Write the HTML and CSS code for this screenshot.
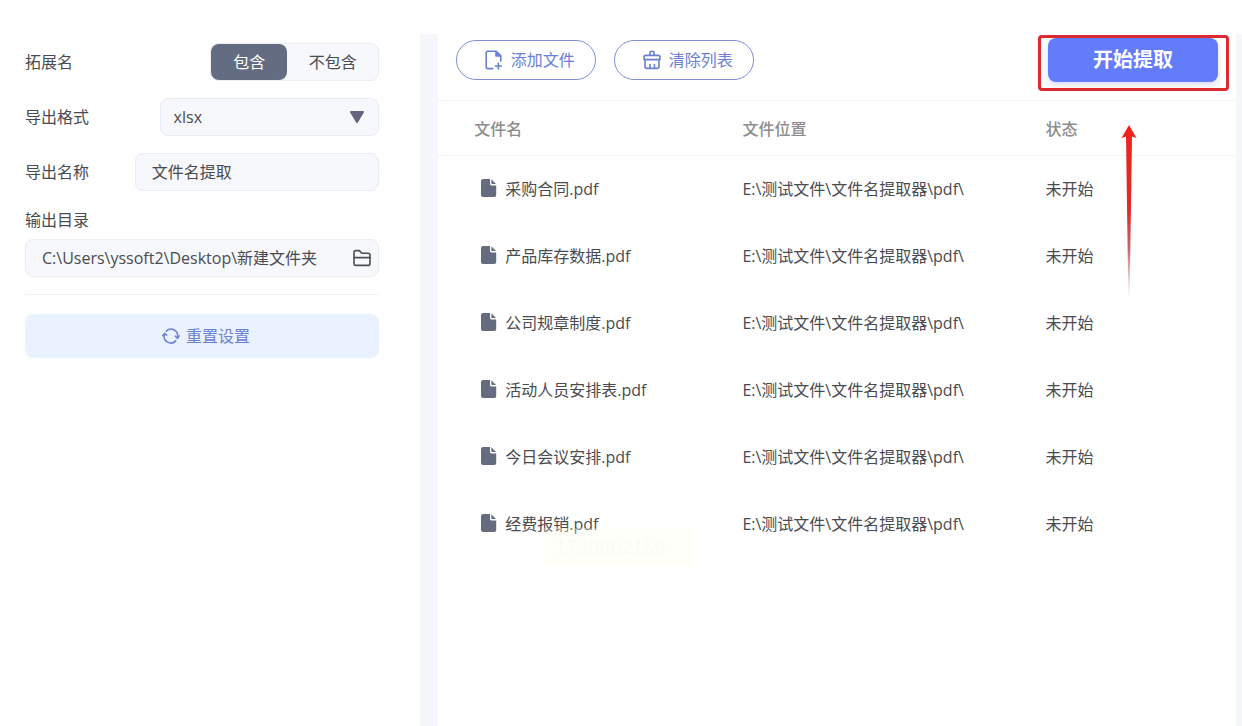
FILE: index.html
```html
<!DOCTYPE html>
<html lang="zh-CN">
<head>
  <meta charset="UTF-8" />
  <meta name="viewport" content="width=device-width, initial-scale=1.0"/>
  <title>文件名提取</title>
  <link rel="stylesheet" href="styles.css">
</head>
<body>
  <div class="app">
    <form class="sidebar">
      <div class="field">
        <span class="label">拓展名</span>
        <div class="toggle">
          <button type="button" class="toggle-item active">包含</button>
          <button type="button" class="toggle-item">不包含</button>
        </div>
      </div>
      <div class="field">
        <label class="label" for="format">导出格式</label>
        <div class="control select-box">
          <select id="format">
            <option>xlsx</option>
          </select>
          <svg class="caret" width="16" height="12" viewBox="0 0 16 12"><path d="M2 1h12L8 11z" fill="#646380" stroke="#646380" stroke-width="2" stroke-linejoin="round"/></svg>
        </div>
      </div>
      <div class="field">
        <label class="label" for="name">导出名称</label>
        <div class="control name-box">
          <input id="name" type="text" value="文件名提取">
        </div>
      </div>
      <label class="label" for="path">输出目录</label>
      <div class="control path-box">
        <input id="path" type="text" value="C:\Users\yssoft2\Desktop\新建文件夹">
        <button type="button" class="browse" aria-label="浏览">
          <svg width="20" height="18" viewBox="0 0 20 18" fill="none" stroke="#4b4d54" stroke-width="1.6" stroke-linejoin="round" stroke-linecap="round"><path d="M2 15V3.2Q2 1.6 3.6 1.6H7.4L9.8 4.2H16Q18 4.2 18 6V14.4Q18 16.4 15.8 16.4H3.8Q2 16.4 2 15Z"/><path d="M2 8.6H18"/></svg>
        </button>
      </div>
      <hr>
      <button type="reset" class="reset">
        <svg width="18" height="18" viewBox="0 0 20 20" fill="none" stroke="#6a80d2" stroke-width="1.7" stroke-linecap="round" stroke-linejoin="round"><path d="M4.8 4.6A7.4 7.4 0 0 1 17.4 10.4"/><path d="M15.2 15.4A7.4 7.4 0 0 1 2.6 8.6"/><path d="M14.8 10.2L17.3 12.6L19.2 9.8"/><path d="M0.9 9.6L2.7 7.2L5.2 9"/></svg>
        <span>重置设置</span>
      </button>
    </form>

    <div class="splitter"></div>

    <main class="panel">
      <div class="toolbar">
        <button type="button" class="pill">
          <svg width="20" height="20" viewBox="0 0 20 20" fill="none" stroke="#6a80d2" stroke-width="1.6" stroke-linecap="round" stroke-linejoin="round"><path d="M8.6 18.6H4Q2.2 18.6 2.2 16.8V3Q2.2 1.2 4 1.2H12L16.8 6V11"/><path d="M12 1.2V6H16.8Z" fill="#6a80d2"/><path d="M14.4 13V19M11.4 16H17.4"/></svg>
          <span>添加文件</span>
        </button>
        <button type="button" class="pill">
          <svg width="20" height="20" viewBox="0 0 20 20" fill="none" stroke="#6a80d2" stroke-width="1.6" stroke-linecap="round" stroke-linejoin="round"><path d="M8 5.4V2.8Q8 1.2 10 1.2Q12 1.2 12 2.8V5.4"/><path d="M3.6 5.4H16.4Q18 5.4 18 7.2V9.6H2V7.2Q2 5.4 3.6 5.4Z"/><path d="M3 9.6V16.6Q3 18.4 4.8 18.4H15.2Q17 18.4 17 16.6V9.6"/><path d="M8 18V14.6M12.4 18V14.6"/></svg>
          <span>清除列表</span>
        </button>
        <div class="start-wrap">
          <button type="button" class="start">开始提取</button>
          <div class="mark"></div>
          <svg class="arrow" width="16" height="178" viewBox="0 0 16 178">
            <defs>
              <linearGradient id="fade" x1="0" y1="0" x2="0" y2="1">
                <stop offset="0" stop-color="#f0221a"/>
                <stop offset="0.5" stop-color="#e02a28"/>
                <stop offset="0.72" stop-color="#b5525c" stop-opacity="0.85"/>
                <stop offset="1" stop-color="#e8a0a0" stop-opacity="0"/>
              </linearGradient>
            </defs>
            <path d="M8 1L15.5 14L11 12.5L8.6 177H7.4L5 12.5L0.5 14Z" fill="url(#fade)"/>
          </svg>
        </div>
      </div>

      <table class="files">
        <thead>
          <tr><th class="col-name">文件名</th><th class="col-path">文件位置</th><th>状态</th></tr>
        </thead>
        <tbody>
          <tr>
            <td><svg class="doc" width="16" height="18" viewBox="0 0 16 18"><path d="M2 0H9V5Q9 6.4 10.4 6.4H15.2V16Q15.2 18 13.2 18H2Q0 18 0 16V2Q0 0 2 0Z"/><path d="M10.4 0.2L15 5H10.4Z"/></svg>采购合同.pdf</td>
            <td>E:\测试文件\文件名提取器\pdf\</td>
            <td>未开始</td>
          </tr>
          <tr>
            <td><svg class="doc" width="16" height="18" viewBox="0 0 16 18"><path d="M2 0H9V5Q9 6.4 10.4 6.4H15.2V16Q15.2 18 13.2 18H2Q0 18 0 16V2Q0 0 2 0Z"/><path d="M10.4 0.2L15 5H10.4Z"/></svg>产品库存数据.pdf</td>
            <td>E:\测试文件\文件名提取器\pdf\</td>
            <td>未开始</td>
          </tr>
          <tr>
            <td><svg class="doc" width="16" height="18" viewBox="0 0 16 18"><path d="M2 0H9V5Q9 6.4 10.4 6.4H15.2V16Q15.2 18 13.2 18H2Q0 18 0 16V2Q0 0 2 0Z"/><path d="M10.4 0.2L15 5H10.4Z"/></svg>公司规章制度.pdf</td>
            <td>E:\测试文件\文件名提取器\pdf\</td>
            <td>未开始</td>
          </tr>
          <tr>
            <td><svg class="doc" width="16" height="18" viewBox="0 0 16 18"><path d="M2 0H9V5Q9 6.4 10.4 6.4H15.2V16Q15.2 18 13.2 18H2Q0 18 0 16V2Q0 0 2 0Z"/><path d="M10.4 0.2L15 5H10.4Z"/></svg>活动人员安排表.pdf</td>
            <td>E:\测试文件\文件名提取器\pdf\</td>
            <td>未开始</td>
          </tr>
          <tr>
            <td><svg class="doc" width="16" height="18" viewBox="0 0 16 18"><path d="M2 0H9V5Q9 6.4 10.4 6.4H15.2V16Q15.2 18 13.2 18H2Q0 18 0 16V2Q0 0 2 0Z"/><path d="M10.4 0.2L15 5H10.4Z"/></svg>今日会议安排.pdf</td>
            <td>E:\测试文件\文件名提取器\pdf\</td>
            <td>未开始</td>
          </tr>
          <tr>
            <td><svg class="doc" width="16" height="18" viewBox="0 0 16 18"><path d="M2 0H9V5Q9 6.4 10.4 6.4H15.2V16Q15.2 18 13.2 18H2Q0 18 0 16V2Q0 0 2 0Z"/><path d="M10.4 0.2L15 5H10.4Z"/></svg>经费报销.pdf</td>
            <td>E:\测试文件\文件名提取器\pdf\</td>
            <td>未开始</td>
          </tr>
        </tbody>
      </table>
      <div class="watermark">1730862156</div>
    </main>
  </div>
</body>
</html>
```
FILE: styles.css
```css
* {
  box-sizing: border-box;
}
body {
  margin: 0;
  background: #fff;
  color: #4a4b50;
  font-family: "Open Sans", "Noto Sans CJK SC", sans-serif;
  font-size: 16px;
  line-height: 24px;
}
button, input, select {
  margin: 0;
  padding: 0;
  border: none;
  background: none;
  color: inherit;
  font: inherit;
}
.app {
  display: flex;
  min-height: 100vh;
  padding: 34px 6px 0 0;
  background: linear-gradient(#fff 34px, #f6f7fb 34px);
}

/* left settings */
.sidebar {
  flex: 0 0 34%;
  padding: 9px 41px 0 25px;
  background: #fff;
}
.field {
  display: flex;
  align-items: center;
  justify-content: space-between;
  height: 38px;
  margin-bottom: 17px;
}
.label {
  display: block;
}
.toggle, .control {
  display: flex;
  align-items: center;
  height: 38px;
  border: 1px solid #ebedf3;
  border-radius: 8px;
  background: #f7f8fb;
}
.toggle-item {
  width: 91px;
  height: 36px;
  border-radius: 8px;
}
.toggle-item.active {
  width: 76px;
  background: #636c80;
  color: #fff;
}
.select-box {
  position: relative;
  width: 62%;
}
.select-box select {
  width: 100%;
  height: 100%;
  padding: 0 13px;
  appearance: none;
}
.caret {
  position: absolute;
  right: 13px;
  pointer-events: none;
}
.name-box {
  width: 69%;
}
.control input {
  flex: 1;
  min-width: 0;
  padding-left: 16px;
}
.path-box {
  margin-top: 7px;
}
.browse {
  display: flex;
  padding: 0 6px;
}
hr {
  height: 1px;
  margin: 17px 0 19px;
  border: none;
  background: #f0f1f4;
}
.reset {
  display: flex;
  align-items: center;
  justify-content: center;
  gap: 6px;
  width: 100%;
  height: 44px;
  padding-left: 8px;
  border-radius: 8px;
  background: #eaf2ff;
  color: #6a80d2;
}

.splitter {
  width: 18px;
}

/* file list */
.panel {
  position: relative;
  flex: 1;
  background: #fff;
}
.toolbar {
  display: flex;
  align-items: center;
  gap: 18px;
  padding: 4px 18px 18px;
  border-bottom: 1px solid #f3f4f6;
}
.pill {
  display: flex;
  align-items: center;
  justify-content: center;
  gap: 7px;
  width: 140px;
  height: 40px;
  padding-left: 6px;
  border: 1px solid #7f90d0;
  border-radius: 20px;
  color: #6a80d2;
}
.start-wrap {
  position: relative;
  margin-left: auto;
}
.start {
  display: block;
  width: 170px;
  height: 44px;
  border-radius: 8px;
  background: #637cfb;
  box-shadow: 0 3px 6px #dcd9fb;
  color: #fff;
  font-size: 20px;
  font-weight: bold;
}
/* red callout round the start button */
.mark {
  position: absolute;
  inset: -3px -11px -9px -10px;
  border: 3px solid #dc2a30;
  border-radius: 4px;
  pointer-events: none;
}
.arrow {
  position: absolute;
  top: 86px;
  left: 73px;
}
.files {
  width: 100%;
  table-layout: fixed;
  border-collapse: collapse;
}
.files th {
  height: 54px;
  padding: 2px 0 0 1px;
  border-bottom: 1px solid #f3f4f6;
  color: #8c8c8e;
  font-weight: 500;
  text-align: left;
}
.files .col-name {
  width: 38%;
  padding-left: 36px;
}
.files .col-path {
  width: 38%;
}
.files td {
  height: 67px;
  padding: 0 0 0 1px;
}
.files td:first-child {
  padding-left: 43px;
}
.doc {
  margin-right: 8px;
  vertical-align: -2px;
  fill: #656c80;
}
.watermark {
  position: absolute;
  top: 494px;
  left: 105px;
  padding: 7px 32px 7px 12px;
  background: rgba(255, 255, 235, 0.3);
  color: #fafaf7;
  font-family: "Liberation Serif", serif;
  font-size: 22px;
}
```
